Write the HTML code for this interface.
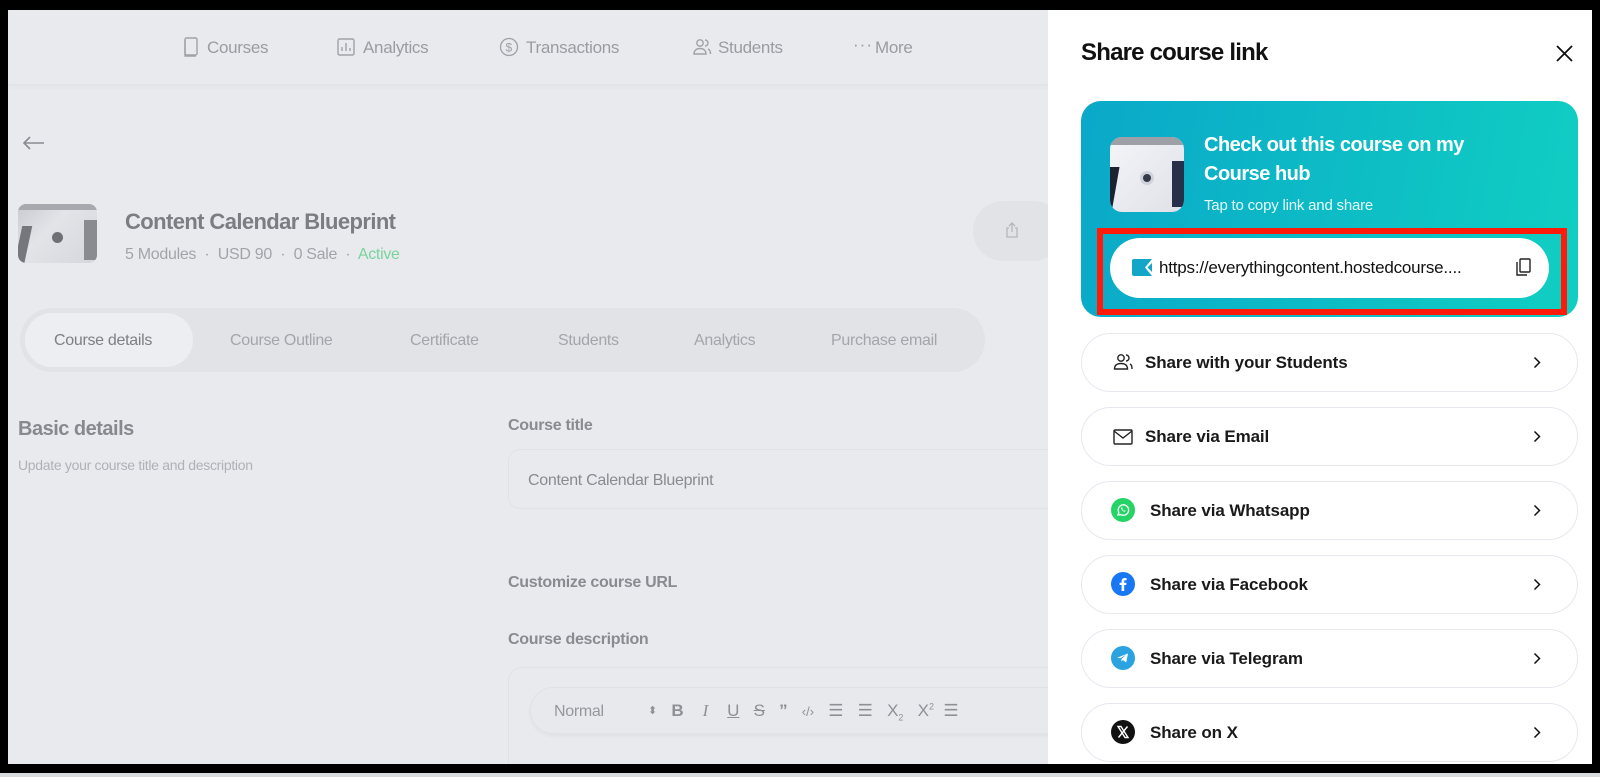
<!DOCTYPE html>
<html><head><meta charset="utf-8"><style>
*{box-sizing:border-box;margin:0;padding:0}
body{width:1600px;height:777px;background:#000;position:relative;overflow:hidden;font-family:"Liberation Sans",sans-serif}
.a{position:absolute}
#main{left:8px;top:10px;width:1042px;height:754px;background:#e9eaee;overflow:hidden}
.nav{color:#9b9ca1;font-size:17px;letter-spacing:-0.3px;top:28px;white-space:nowrap}
.g{color:#8f9095}
#panel{left:1048px;top:10px;width:544px;height:754px;background:#fff;overflow:hidden}
.btn{left:33px;width:497px;height:59px;border:1.5px solid #e6e8f0;border-radius:30px}
.btn span{position:absolute;top:19px;font-size:17px;font-weight:bold;color:#1a1a1a;letter-spacing:-0.1px}
.chev{position:absolute;right:36px;top:22px}
.ic{position:absolute;left:30px;top:18px;width:22px;height:22px}
</style></head><body>
<div id="main" class="a">
 <div class="a" style="left:0;top:0;width:1042px;height:75px;border-bottom:1px solid #e2e3e7;box-shadow:0 2px 6px rgba(0,0,0,0.03)"></div>
 <svg class="a" style="left:174px;top:27px" width="18" height="20" viewBox="0 0 18 20" fill="none" stroke="#a0a1a6" stroke-width="1.4"><rect x="3" y="1" width="12" height="17" rx="1.5"/><path d="M3 3v16h11"/></svg>
 <div class="a nav" style="left:199px">Courses</div>
 <svg class="a" style="left:329px;top:28px" width="18" height="18" viewBox="0 0 18 18" fill="none" stroke="#a0a1a6" stroke-width="1.4"><rect x="1" y="1" width="16" height="16" rx="1.5"/><path d="M5 13V9M9 13V5M13 13v-3"/></svg>
 <div class="a nav" style="left:355px">Analytics</div>
 <svg class="a" style="left:491px;top:27px" width="20" height="20" viewBox="0 0 20 20" fill="none" stroke="#a0a1a6" stroke-width="1.3"><circle cx="10" cy="10" r="8.5"/><text x="6.5" y="14.5" font-size="12" fill="#a0a1a6" stroke="none" font-family="Liberation Sans">$</text></svg>
 <div class="a nav" style="left:518px">Transactions</div>
 <svg class="a" style="left:684px;top:28px" width="20" height="18" viewBox="0 0 20 18" fill="none" stroke="#a0a1a6" stroke-width="1.4"><circle cx="8" cy="5" r="3.2"/><path d="M2 16c0-4 3-5.5 6-5.5s6 1.5 6 5.5zM13 2a3 3 0 010 6M16 11c1.5.6 2.5 2 2.5 5"/></svg>
 <div class="a nav" style="left:710px">Students</div>
 <div class="a nav" style="left:845px;top:25px;letter-spacing:1px">···</div>
 <div class="a nav" style="left:867px">More</div>

 <svg class="a" style="left:14px;top:126px" width="24" height="14" viewBox="0 0 24 14" fill="none" stroke="#8a8b90" stroke-width="1.6"><path d="M22 7H2M8 1L2 7l6 6"/></svg>

 <div class="a" style="left:10px;top:194px;width:79px;height:59px;border-radius:8px;background:linear-gradient(135deg,#c9cad0,#e3e4e8 40%,#d5d6db);overflow:hidden">
  <div class="a" style="left:0;top:0;width:79px;height:6px;background:#a8a9ae"></div>
  <div class="a" style="left:0;top:22px;width:10px;height:40px;background:#76777c;transform:skewX(-12deg)"></div>
  <div class="a" style="left:66px;top:16px;width:13px;height:40px;background:#8a8b91"></div>
  <div class="a" style="left:34px;top:28px;width:11px;height:11px;border-radius:50%;background:#6f7076"></div>
 </div>
 <div class="a" style="left:117px;top:199px;font-size:22px;font-weight:bold;color:#7c7d82;letter-spacing:-0.6px">Content Calendar Blueprint</div>
 <div class="a" style="left:117px;top:236px;font-size:16px;color:#a3a4a9;letter-spacing:-0.3px">5 Modules &nbsp;·&nbsp; USD 90 &nbsp;·&nbsp; 0 Sale &nbsp;·&nbsp; <span style="color:#78d49b">Active</span></div>
 <div class="a" style="left:965px;top:191px;width:90px;height:60px;border-radius:30px;background:#e2e3e7"></div>
 <svg class="a" style="left:997px;top:212px" width="14" height="16" viewBox="0 0 14 16" fill="none" stroke="#b5b6ba" stroke-width="1.3"><path d="M4 6H2v9h10V6h-2M7 10V1M4 4l3-3 3 3"/></svg>

 <div class="a" style="left:12px;top:298px;width:965px;height:64px;border-radius:32px;background:#e2e3e7"></div>
 <div class="a" style="left:17px;top:303px;width:168px;height:54px;border-radius:27px;background:#edeef1"></div>
 <div class="a" style="left:46px;top:322px;font-size:16px;color:#7e7f84;letter-spacing:-0.3px">Course details</div>
 <div class="a" style="left:222px;top:322px;font-size:16px;color:#a4a5aa;letter-spacing:-0.3px">Course Outline</div>
 <div class="a" style="left:402px;top:322px;font-size:16px;color:#a4a5aa;letter-spacing:-0.3px">Certificate</div>
 <div class="a" style="left:550px;top:322px;font-size:16px;color:#a4a5aa;letter-spacing:-0.3px">Students</div>
 <div class="a" style="left:686px;top:322px;font-size:16px;color:#a4a5aa;letter-spacing:-0.3px">Analytics</div>
 <div class="a" style="left:823px;top:322px;font-size:16px;color:#a4a5aa;letter-spacing:-0.3px">Purchase email</div>

 <div class="a" style="left:10px;top:408px;font-size:20px;font-weight:bold;color:#88898e;letter-spacing:-0.5px">Basic details</div>
 <div class="a" style="left:10px;top:447px;font-size:14px;color:#b0b1b6;letter-spacing:-0.3px">Update your course title and description</div>
 <div class="a" style="left:500px;top:407px;font-size:16px;font-weight:bold;color:#8a8b90;letter-spacing:-0.3px">Course title</div>
 <div class="a" style="left:500px;top:439px;width:600px;height:60px;border:1px solid #e1e2e6;border-radius:12px"></div>
 <div class="a" style="left:520px;top:462px;font-size:16px;color:#8a8b90;letter-spacing:-0.3px">Content Calendar Blueprint</div>
 <div class="a" style="left:500px;top:564px;font-size:16px;font-weight:bold;color:#8a8b90;letter-spacing:-0.3px">Customize course URL</div>
 <div class="a" style="left:500px;top:621px;font-size:16px;font-weight:bold;color:#8a8b90;letter-spacing:-0.3px">Course description</div>
 <div class="a" style="left:500px;top:657px;width:600px;height:200px;border:1px solid #e1e2e6;border-radius:14px"></div>
 <div class="a" style="left:522px;top:677px;width:600px;height:47px;border:1px solid #e1e2e6;border-radius:24px;background:#e8e9ed;box-shadow:0 2px 4px rgba(0,0,0,0.04)"></div>
 <div class="a" style="left:546px;top:693px;font-size:16px;color:#96979c;white-space:nowrap;letter-spacing:-0.3px">Normal</div>
 <div class="a g" style="left:640px;top:691px;font-size:17px;color:#8f9095;white-space:nowrap;word-spacing:0">
  <span style="font-size:11px;position:relative;top:-2px">⬍</span>&nbsp;&nbsp;&nbsp;<b>B</b>&nbsp;&nbsp;&nbsp;&nbsp;<i style="font-family:'Liberation Serif'">I</i>&nbsp;&nbsp;&nbsp;&nbsp;<u>U</u>&nbsp;&nbsp;&nbsp;<s>S</s>&nbsp;&nbsp;&nbsp;<b>”</b>&nbsp;&nbsp;&nbsp;<span style="font-size:13px">‹/›</span>&nbsp;&nbsp;&nbsp;☰&nbsp;&nbsp;&nbsp;☰&nbsp;&nbsp;&nbsp;X<sub style="font-size:9px">2</sub>&nbsp;&nbsp;&nbsp;X<sup style="font-size:9px">2</sup>&nbsp;&nbsp;☰
 </div>
</div>

<div id="panel" class="a">
 <div class="a" style="left:33px;top:29px;font-size:24px;font-weight:bold;color:#111;letter-spacing:-0.8px">Share course link</div>
 <svg class="a" style="left:508px;top:35px" width="17" height="17" viewBox="0 0 17 17" stroke="#111" stroke-width="1.8"><path d="M1 1l15 15M16 1L1 16"/></svg>
 <div class="a" style="left:33px;top:91px;width:497px;height:216px;border-radius:20px;background:linear-gradient(100deg,#0aa8c9,#10cfc2)"></div>
 <div class="a" style="left:62px;top:127px;width:74px;height:75px;border-radius:12px;background:linear-gradient(135deg,#f4f5f8,#dfe1e8);overflow:hidden">
  <div class="a" style="left:0;top:0;width:74px;height:8px;background:#9ea0a8"></div>
  <div class="a" style="left:-4px;top:30px;width:10px;height:40px;background:#1d2233;transform:skewX(-10deg)"></div>
  <div class="a" style="left:62px;top:24px;width:12px;height:46px;background:#26304a"></div>
  <div class="a" style="left:30px;top:34px;width:14px;height:14px;border-radius:50%;background:#333a48;border:3px solid #cfd2da"></div>
 </div>
 <div class="a" style="left:156px;top:121px;font-size:20px;font-weight:bold;color:#fff;line-height:29px;letter-spacing:-0.5px">Check out this course on my<br>Course hub</div>
 <div class="a" style="left:156px;top:187px;font-size:15px;color:#e6fbfb;letter-spacing:-0.2px">Tap to copy link and share</div>
 <div class="a" style="left:49px;top:218px;width:470px;height:87px;border:6px solid #ff1a0a"></div>
 <div class="a" style="left:62px;top:228px;width:439px;height:60px;border-radius:30px;background:#fff"></div>
 <svg class="a" style="left:84px;top:249px" width="20" height="17" viewBox="0 0 20 17"><path d="M2 0h18L13 8.5 20 17H2a2 2 0 01-2-2V2a2 2 0 012-2z" fill="#14a6c6"/><path d="M20 4l-4.5 4.5L20 13z" fill="#14a6c6"/></svg>
 <div class="a" style="left:111px;top:248px;font-size:17px;color:#111;letter-spacing:-0.2px;white-space:nowrap">https://everythingcontent.hostedcourse....</div>
 <svg class="a" style="left:467px;top:248px" width="16" height="19" viewBox="0 0 16 19" fill="none" stroke="#222" stroke-width="1.4"><rect x="5" y="1" width="10" height="13" rx="1"/><path d="M2 4v13h10"/></svg>

 <div class="a btn" style="top:323px"><svg class="ic" viewBox="0 0 22 22" fill="none" stroke="#222" stroke-width="1.4"><circle cx="9" cy="6" r="3.2"/><path d="M2.5 17c0-4 3-5.5 6.5-5.5s6.5 1.5 6.5 5.5zM14 3a3 3 0 010 6M18 12c1.5.6 2 2.5 2 5"/></svg><span style="left:63px">Share with your Students</span><svg class="chev" width="8" height="13" viewBox="0 0 8 13" fill="none" stroke="#111" stroke-width="1.5"><path d="M1.5 1.5l5 5-5 5"/></svg></div>
 <div class="a btn" style="top:397px"><svg class="ic" viewBox="0 0 22 22" fill="none" stroke="#222" stroke-width="1.4"><rect x="2" y="4" width="18" height="14" rx="1"/><path d="M2 5l9 7 9-7"/></svg><span style="left:63px">Share via Email</span><svg class="chev" width="8" height="13" viewBox="0 0 8 13" fill="none" stroke="#111" stroke-width="1.5"><path d="M1.5 1.5l5 5-5 5"/></svg></div>
 <div class="a btn" style="top:471px"><svg class="ic" viewBox="0 0 24 24" style="width:24px;height:24px;left:29px;top:16px"><circle cx="12" cy="12" r="12" fill="#25d366"/><path d="M7 17l.8-2.6A5.2 5.2 0 1112 17.2a5 5 0 01-2.5-.6z" fill="none" stroke="#fff" stroke-width="1.3"/><path d="M10 9.5c0 2 1.8 4 4 4.3l.6-.9-1-.6-.6.5c-.8-.4-1.5-1-1.8-1.8l.5-.6-.5-1z" fill="#fff"/></svg><span style="left:68px">Share via Whatsapp</span><svg class="chev" width="8" height="13" viewBox="0 0 8 13" fill="none" stroke="#111" stroke-width="1.5"><path d="M1.5 1.5l5 5-5 5"/></svg></div>
 <div class="a btn" style="top:545px"><svg class="ic" viewBox="0 0 24 24" style="width:24px;height:24px;left:29px;top:16px"><circle cx="12" cy="12" r="12" fill="#1877f2"/><path d="M13.2 19v-6h2l.3-2.3h-2.3V9.3c0-.7.2-1.1 1.1-1.1h1.3V6.1a16 16 0 00-1.9-.1c-1.9 0-3.1 1.1-3.1 3.2v1.5H8.6V13h2v6z" fill="#fff"/></svg><span style="left:68px">Share via Facebook</span><svg class="chev" width="8" height="13" viewBox="0 0 8 13" fill="none" stroke="#111" stroke-width="1.5"><path d="M1.5 1.5l5 5-5 5"/></svg></div>
 <div class="a btn" style="top:619px"><svg class="ic" viewBox="0 0 24 24" style="width:24px;height:24px;left:29px;top:16px"><circle cx="12" cy="12" r="12" fill="#2aa3e0"/><path d="M6 11.8l11-4.3-1.8 9-3.3-2.5-1.6 1.6.2-2.6 4.6-4.3-5.8 3.6z" fill="#fff"/></svg><span style="left:68px">Share via Telegram</span><svg class="chev" width="8" height="13" viewBox="0 0 8 13" fill="none" stroke="#111" stroke-width="1.5"><path d="M1.5 1.5l5 5-5 5"/></svg></div>
 <div class="a btn" style="top:693px"><svg class="ic" viewBox="0 0 24 24" style="width:24px;height:24px;left:29px;top:16px"><circle cx="12" cy="12" r="12" fill="#111"/><path d="M7 6.5h3l7 11h-3zM16.5 6.5L7.5 17.5" stroke="#fff" stroke-width="1.4" fill="none"/></svg><span style="left:68px">Share on X</span><svg class="chev" width="8" height="13" viewBox="0 0 8 13" fill="none" stroke="#111" stroke-width="1.5"><path d="M1.5 1.5l5 5-5 5"/></svg></div>
</div>
<div class="a" style="left:0;top:773px;width:1600px;height:4px;background:#d9dadd"></div>
</body></html>
